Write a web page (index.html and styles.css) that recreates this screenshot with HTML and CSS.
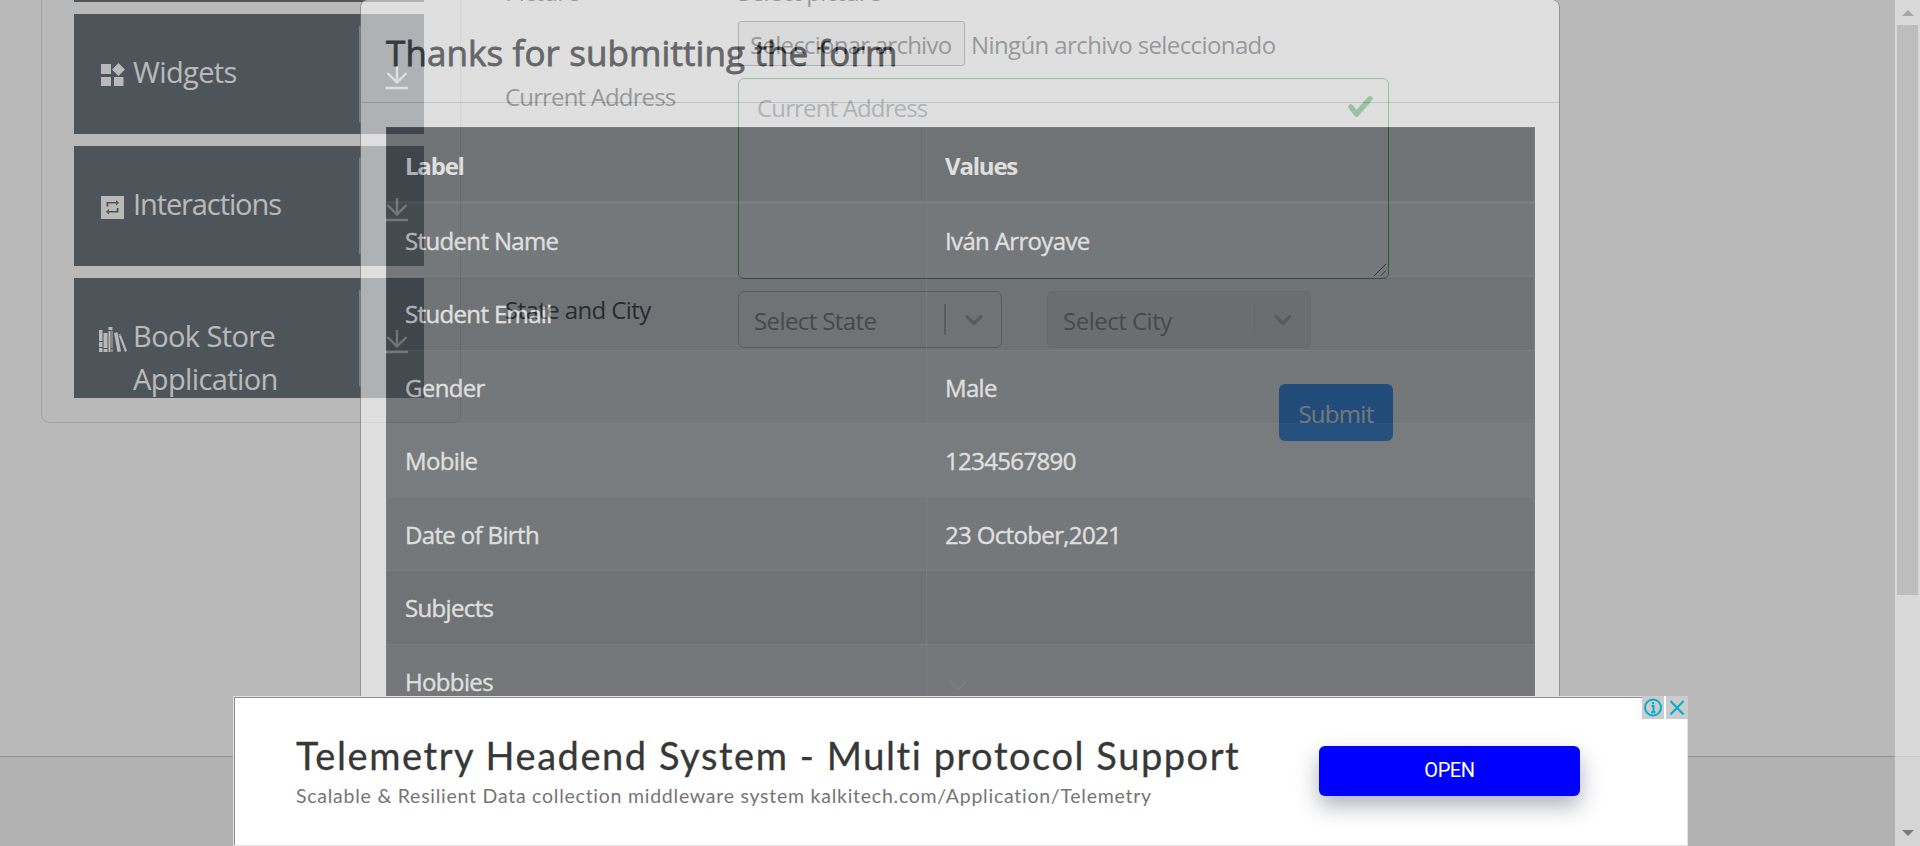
FILE: index.html
```html
<!DOCTYPE html>
<html lang="es">
<head>
<meta charset="utf-8">
<title>Practice Form</title>
<link rel="stylesheet" href="styles.css">
</head>
<body>
<div class="page">
  <div class="content">
    <aside class="sidebar">
      <div class="group"></div>
      <div class="group">
        <svg class="group-icon" viewBox="0 0 24 24"><path d="M0 1h10v10H0zM0 14h10v9H0zM13 14h9.500v9H13zM17.500 0l6.500 6.500-6.500 6.500L11 6.500z"/></svg>
        <span class="group-name">Widgets</span>
        <span class="group-arrow"><svg viewBox="0 0 24 24"><path d="M12 0v16M2.500 7l9.500 9.500 9.500-9.500M.5 22h22.500"/></svg></span>
      </div>
      <div class="group">
        <svg class="group-icon" viewBox="0 0 24 24"><path fill-rule="evenodd" d="M0 1h23v23H0zM5.500 7v4.500h1.800V8.500h7.700v2l3-2.800-3-2.800V7zM17.500 17.500v-4.500h-1.800v3H8v-2l-3 2.800 3 2.800v-2.100z"/></svg>
        <span class="group-name tight">Interactions</span>
        <span class="group-arrow"><svg viewBox="0 0 24 24"><path d="M12 0v16M2.500 7l9.500 9.500 9.500-9.500M.5 22h22.500"/></svg></span>
      </div>
      <div class="group">
        <svg class="group-icon books" viewBox="0 0 28 26"><path fill-rule="evenodd" d="M0 3h3.500v11H0zM0 15h3.500v5H0zM0 21h3.500v4H0zM4.500 6h4v15h-4zM4.500 22h4v3h-4zM9.500 0h4v3h-4zM9.500 4h2v21h-2zM12.500 4h1v17h-1zM12.500 22h1v3h-1zM15 6l3.500-.7L22 24.500l-3.500.6zM20 9l2-.8L28 24l-2 .8zM19.500 7.500l2-.8.4 1-2 .7z"/></svg>
        <span class="group-name">Book Store Application</span>
        <span class="group-arrow"><svg viewBox="0 0 24 24"><path d="M12 0v16M2.500 7l9.500 9.500 9.500-9.500M.5 22h22.500"/></svg></span>
      </div>
    </aside>
    <form class="form">
      <div class="form-row row-picture">
        <label class="form-label">Picture</label>
        <div class="field">
          <div class="field-title">Select picture</div>
          <div class="file"><span class="file-button">Seleccionar archivo</span><span class="file-name">Ningún archivo seleccionado</span></div>
        </div>
      </div>
      <div class="form-row row-address">
        <label class="form-label tight">Current Address</label>
        <div class="textarea">
          <span class="placeholder tight">Current Address</span>
          <svg class="check" viewBox="0 0 8 8"><path d="M2.300 6.730L.6 4.530c-.4-1.040.46-1.400 1.100-.8l1.100 1.400 3.400-3.800c.6-.63 1.600-.27 1.200.7l-4 4.600c-.43.5-.8.400-1.100.1z"/></svg>
          <svg class="grip" viewBox="0 0 12 12"><path d="M0 12L12 0M6.500 12L12 6.500"/></svg>
        </div>
      </div>
      <div class="form-row row-city">
        <label class="form-label">State and City</label>
        <div class="select"><span>Select State</span><i class="separator"></i><svg viewBox="0 0 20 12"><path d="M3 2.500l7 7 7-7"/></svg></div>
        <div class="select disabled"><span>Select City</span><i class="separator"></i><svg viewBox="0 0 20 12"><path d="M3 2.500l7 7 7-7"/></svg></div>
      </div>
      <div class="form-actions"><button type="button" class="submit">Submit</button></div>
    </form>
  </div>
  <footer class="footer"></footer>
</div>

<div class="backdrop"></div>

<div class="modal">
  <div class="modal-header">Thanks for submitting the form</div>
  <div class="modal-body">
    <div class="table">
      <div class="tr head"><div class="td">Label</div><div class="td">Values</div></div>
      <div class="tr odd"><div class="td">Student Name</div><div class="td">Iván Arroyave</div></div>
      <div class="tr"><div class="td">Student Email</div><div class="td"></div></div>
      <div class="tr odd"><div class="td">Gender</div><div class="td">Male</div></div>
      <div class="tr hover"><div class="td">Mobile</div><div class="td">1234567890</div></div>
      <div class="tr odd"><div class="td">Date of Birth</div><div class="td">23 October,2021</div></div>
      <div class="tr"><div class="td">Subjects</div><div class="td"></div></div>
      <div class="tr odd"><div class="td">Hobbies</div><div class="td"></div></div>
    </div>
  </div>
</div>

<svg class="collapse" viewBox="0 0 20 10"><path d="M1 1l9 8 9-8"/></svg>

<div class="scrollbar">
  <svg class="scroll-up" viewBox="0 0 12 6"><path d="M0 6L6 0l6 6z"/></svg>
  <div class="thumb"></div>
  <svg class="scroll-down" viewBox="0 0 12 6"><path d="M0 0l6 6 6-6z"/></svg>
  <div class="scroll-shade"></div>
</div>

<div class="ad">
  <div class="ad-copy">
    <div class="ad-title">Telemetry Headend System - Multi protocol Support</div>
    <div class="ad-text">Scalable &amp; Resilient Data collection middleware system kalkitech.com/Application/Telemetry</div>
  </div>
  <div class="ad-open">OPEN</div>
  <div class="ad-badges">
    <svg viewBox="0 0 22 23"><circle cx="11" cy="11.500" r="8"/><path d="M9.500 10h2v6M9 16.200h4.500M11 6v2.200" /></svg>
    <svg viewBox="0 0 22 23"><path d="M4.500 5l13 13.500M17.500 5l-13 13.500"/></svg>
  </div>
</div>
</body>
</html>
```
FILE: styles.css
```css
* { box-sizing: border-box; }
html { overflow: hidden; }
body {
  margin: 0;
  width: 1920px;
  height: 846px;
  position: relative;
  overflow: hidden;
  background: #fff;
  color: #212529;
  font-family: "Open Sans", "Noto Sans", sans-serif;
  font-size: 24px;
  line-height: 36px;
  letter-spacing: -0.6px;
  white-space: nowrap;
}
.page { height: 846px; display: flex; flex-direction: column; overflow: hidden; }
.content { height: 756px; display: flex; padding-left: 41px; }
.footer { flex: 1; background: #f4f4f4; border-top: 1px solid #cbcbcb; }

.sidebar {
  width: 420px;
  height: 583px;
  margin-top: -160px;
  padding: 0 0 24px 32px;
  border: 1px solid #dfdfdf;
  border-radius: 8px;
  display: flex;
  flex-direction: column;
  justify-content: flex-end;
  gap: 12px;
}
.group {
  flex: none;
  width: 350px;
  height: 120px;
  padding: 40px 0 0 27px;
  display: flex;
  background: #6c757d;
  color: #fff;
  overflow: hidden;
}
.group-icon { width: 24px; height: 24px; margin-top: 9px; fill: #fff; flex: none; }
.group-icon.books { width: 28px; height: 26px; margin: 9px -2px 0 -2px; }
.group-name {
  width: 200px;
  margin: -4px 0 0 8px;
  font-size: 29px;
  line-height: 43px;
  white-space: normal;
}
.group-name.tight { letter-spacing: -1.100px; }
.group-arrow {
  height: 96px;
  width: 60px;
  margin: -28px 0 0 26px;
  padding: 40px 0 0 24px;
  border-left: 2px solid #b3b3b3;
}
.group-arrow svg { width: 24px; height: 24px; display: block; fill: none; stroke: #fff; stroke-width: 2.400; }

.form { width: 889px; margin: -26px 0 0 44px; }
.form-row { display: flex; }
.form-label { width: 233px; flex: none; padding-top: 1px; }
.form-label.tight, .placeholder.tight { letter-spacing: -0.850px; }
.row-picture .form-label { padding-top: 0; }
.file { margin-top: 11px; display: flex; align-items: center; }
.file-button {
  width: 227px;
  height: 45px;
  padding: 5px 0 0 11px;
  border: 1px solid #767676;
  border-radius: 3px;
  background: #efefef;
  letter-spacing: -0.750px;
}
.file-name { margin: 3px 0 0 6px; }
.row-address { margin-top: 12px; }
.textarea {
  position: relative;
  width: 651px;
  height: 201px;
  padding: 11px 18px;
  border: 1px solid #28a745;
  border-radius: 6px;
  color: #6c757d;
}
.check { position: absolute; right: 14px; top: 14px; width: 27px; height: 27px; fill: #28a745; stroke: #28a745; stroke-width: 0.25; }
.grip { position: absolute; right: 2px; bottom: 2px; width: 12px; height: 12px; fill: none; stroke: #333; stroke-width: 1; }
.row-city { margin-top: 12px; }
.select {
  width: 264px;
  height: 57px;
  margin-right: 45px;
  padding: 0 17px 0 15px;
  display: flex;
  align-items: center;
  border: 1px solid #bbb;
  border-radius: 6px;
  color: #808080;
}
.select span { flex: 1; padding-top: 3px; }
.separator { width: 2px; height: 31px; margin-right: 18px; background: #bbb; }
.select svg { width: 20px; height: 12px; fill: none; stroke: #bbb; stroke-width: 3.200; stroke-linecap: round; }
.select.disabled { background: #f2f2f2; border-color: #e6e6e6; }
.disabled span { letter-spacing: -0.5px; }
.disabled .separator { width: 1px; background: #e0e0e0; }
.form-actions { display: flex; justify-content: flex-end; margin: 36px 1px 0 0; }
.submit {
  width: 114px;
  height: 57px;
  padding: 2px 0 0;
  border: 0;
  border-radius: 6px;
  background: #007bff;
  color: #fff;
  font: inherit;
  letter-spacing: -0.7px;
}

.backdrop { position: absolute; inset: 0 25px 0 0; background: rgba(0, 0, 0, 0.275); }

.modal {
  position: absolute;
  left: 360px;
  top: -1px;
  width: 1200px;
  height: 847px;
  opacity: 0.55;
  background: #fff;
  border: 1px solid #777;
  border-radius: 8px;
}
.modal-header {
  height: 103px;
  padding: 26px 25px 22px;
  border-bottom: 1px solid #c9cdd1;
  font-size: 35px;
  font-weight: 500;
  line-height: 54px;
  letter-spacing: 0.1px;
  -webkit-text-stroke: 0.8px #212529;
}
.modal-body { padding: 24px 24px 0 25px; }
.table { border: 1px solid #454d55; background: #343a40; color: #fff; -webkit-text-stroke: 0.35px #fff; }
.tr { height: 73.500px; display: grid; grid-template-columns: 539px 1fr; border-top: 1px solid #454d55; letter-spacing: -0.650px; }
.tr.head { height: 74.500px; border-top: 0; border-bottom: 2px solid #454d55; font-weight: 700; letter-spacing: -1.200px; -webkit-text-stroke: 0; }
.tr.odd { background: #3d4347; }
.tr.hover { background: #454b4f; }
.td { padding: 19px 18px 0; }
.head .td { padding-top: 20px; }
.td + .td { border-left: 1px solid #454d55; }

.collapse { position: absolute; left: 948px; top: 680px; width: 20px; height: 10px; fill: none; stroke: #7f7c7c; stroke-width: 2; }

.scrollbar {
  position: absolute;
  right: 0;
  top: 0;
  width: 25px;
  height: 846px;
  padding: 10px 2px;
  display: flex;
  flex-direction: column;
  align-items: center;
  background: #d9d9d9;
}
.scroll-up { width: 12px; height: 6px; fill: #a6a6a6; flex: none; }
.thumb { width: 21px; height: 570px; margin-top: 9px; background: #bdbdbd; }
.scroll-down { width: 12px; height: 6px; margin-top: auto; fill: #7d7d7d; }
.scroll-shade { position: absolute; left: 0; right: 0; bottom: 0; height: 90px; background: rgba(0, 0, 0, 0.015); border-top: 1px solid #c9c9c9; }

.ad {
  position: absolute;
  left: 233px;
  top: 696px;
  width: 1455px;
  height: 150px;
  display: flex;
  background: #fff;
  border: 1px solid #e0e0e0;
  box-shadow: inset 1px 1px 0 #8b8d8f;
}
.ad-copy { width: 1085px; padding: 35px 0 0 62px; }
.ad-title { height: 46px; font-family: Lato, sans-serif; font-size: 38px; line-height: 46px; letter-spacing: 1.560px; color: #373737; -webkit-text-stroke: 0.3px #373737; }
.ad-text { margin-top: 3px; font-family: Lato, sans-serif; font-size: 19.500px; line-height: 30px; letter-spacing: 0.750px; color: #757575; }
.ad-open {
  width: 261px;
  height: 50px;
  margin-top: 49px;
  border-radius: 6px;
  background: #00f;
  color: #fff;
  font-family: Roboto, sans-serif;
  font-size: 20px;
  line-height: 49px;
  letter-spacing: -0.4px;
  text-align: center;
  box-shadow: 0 10px 22px rgba(30, 35, 60, 0.35);
}
.ad-badges { position: absolute; right: -1px; top: -1px; display: flex; gap: 2px; background: #fff; }
.ad-badges svg { width: 22px; height: 23px; background: #ccc; fill: none; stroke: #00aecd; stroke-width: 2; }
```
